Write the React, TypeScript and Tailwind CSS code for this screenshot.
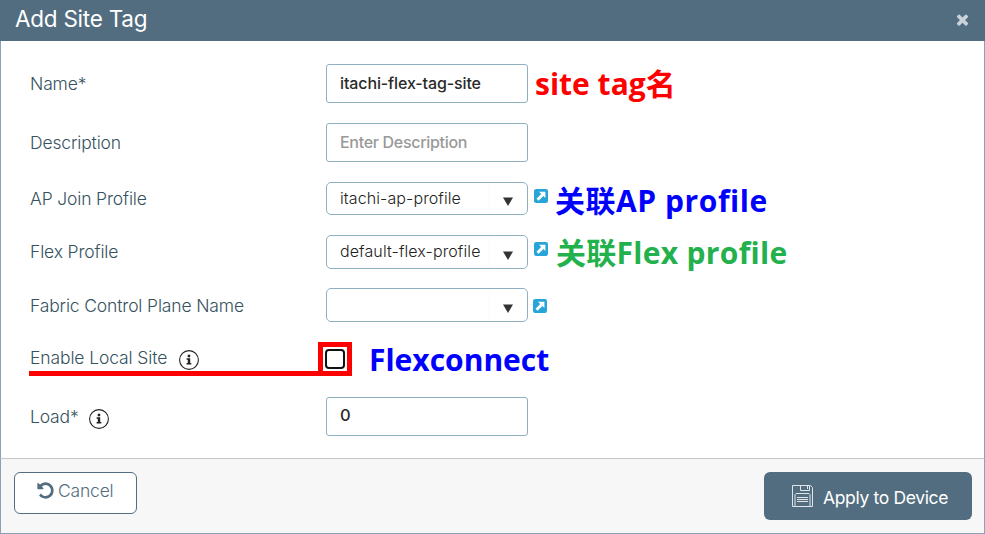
import type { ReactNode } from "react";

const ui = "font-['Inter','Liberation_Sans',sans-serif]";
const noteFont =
  "font-['Open_Sans','Noto_Sans_CJK_SC',sans-serif] font-bold whitespace-pre leading-none";

function Row({ className, label, children }: { className: string; label: ReactNode; children: ReactNode }) {
  return (
    <div className={`flex items-center ${className}`}>
      <div className="flex w-[296px] shrink-0 items-center pt-[2px] text-[17.5px] font-light tracking-[-0.15px] text-[#36525e]">
        {label}
      </div>
      {children}
    </div>
  );
}

function Box({ children, className }: { children: string; className: string }) {
  return (
    <div className={`flex h-[39px] w-[202px] items-center rounded-[3px] border border-[#8fb0c0] bg-white pb-[2px] pl-[13px] ${className}`}>
      {children}
    </div>
  );
}

function Select({ children }: { children?: ReactNode }) {
  return (
    <div className="flex h-full w-[202px] items-center justify-between rounded-[5px] border border-[#8fb0c0] bg-white pl-[13px] text-[16px] font-light tracking-[0.1px] text-[#222]">
      <span className="mb-[2px] whitespace-nowrap">{children}</span>
      <span className="flex h-full w-[38px] items-center justify-center border-l border-[#fafafa] pr-px">
        <svg className="mt-[6px] h-[9px] w-[10px]" viewBox="0 0 10 9">
          <path d="M0 .5h10L5 9z" fill="#333" />
        </svg>
      </span>
    </div>
  );
}

function LinkIcon({ className }: { className: string }) {
  return (
    <svg className={`h-[14px] w-[14px] shrink-0 ${className}`} viewBox="0 0 14 14">
      <rect width="14" height="14" rx="2.2" fill="#27a5d8" />
      <path d="M5 2.7h6.4V9L9.4 7.1 4.5 11.7 2.5 9.7 7.2 4.9z" fill="#fff" />
    </svg>
  );
}

function Info({ className }: { className: string }) {
  return (
    <svg className={`h-[20px] w-[20px] shrink-0 ${className}`} viewBox="0 0 20 20">
      <circle cx="10" cy="10" r="9.4" fill="none" stroke="#222" strokeWidth="1.1" />
      <path d="M8.7 4.8h2.5v2.4H8.7zM7.6 8.3h3.6v4.7h1.1v1.4H7.6V13h1.2V9.7H7.6z" fill="#222" />
    </svg>
  );
}

export default function App() {
  return (
    <div className={`flex h-[534px] w-[985px] flex-col overflow-hidden bg-white ${ui}`}>
      <header className="flex h-[41px] shrink-0 items-center justify-between bg-[#526d80] pr-[14px] pl-[15px] text-white">
        <h1 className="pb-[3px] text-[22.5px] font-normal tracking-[-0.25px]">Add Site Tag</h1>
        <svg className="mb-[3px] h-[17px] w-[17px]" viewBox="0 0 1792 1792" fill="#cbd3d9">
          <path d="M1490 1322q0 40-28 68l-136 136q-28 28-68 28t-68-28l-294-294-294 294q-28 28-68 28t-68-28l-136-136q-28-28-28-68t28-68l294-294-294-294q-28-28-28-68t28-68l136-136q28-28 68-28t68 28l294 294 294-294q28-28 68-28t68 28l136 136q28 28 28 68t-28 68l-294 294 294 294q28 28 28 68z" />
        </svg>
      </header>

      <main className="h-[417px] shrink-0 border-x border-[#8ca0b8] pt-[23px] pl-[29px]">
        <Row className="h-[39px]" label={<span>Name*</span>}>
          <Box className="text-[16px] font-medium tracking-[-0.12px] text-[#2a2a2a]">itachi-flex-tag-site</Box>
          <span className={`${noteFont} ml-[7px] text-[30px] text-[#ff0000]`}>site tag名</span>
        </Row>
        <Row className="mt-5 h-[39px]" label={<span>Description</span>}>
          <Box className="text-[16px] font-medium tracking-[-0.3px] text-[#999]">Enter Description</Box>
        </Row>
        <Row className="mt-5 h-[33px]" label={<span>AP Join Profile</span>}>
          <Select><span>itachi-ap-profile</span></Select>
          <LinkIcon className="mb-[5px] ml-[6px]" />
          <span className={`${noteFont} mt-[5px] ml-[7px] text-[30px] tracking-[0.55px] text-[#0000ff]`}>关联AP profile</span>
        </Row>
        <Row className="mt-5 h-[34px]" label={<span className="pb-[2px]">Flex Profile</span>}>
          <Select><span>default-flex-profile</span></Select>
          <LinkIcon className="mb-[6px] ml-[6px]" />
          <span className={`${noteFont} mt-[2px] ml-[8px] text-[30px] tracking-[0.3px] text-[#22b14c]`}>关联Flex profile</span>
        </Row>
        <Row className="mt-[19px] h-[34px]" label={<span>Fabric Control Plane Name</span>}>
          <Select />
          <LinkIcon className="mt-[2px] ml-[5px]" />
        </Row>
        <div className="relative mt-5 flex h-[34px] items-center">
          <div className="flex w-[288px] shrink-0 items-center text-[17.5px] font-light tracking-[-0.12px] text-[#36525e]">
            <span className="mb-[2px]">Enable Local Site</span>
            <Info className="mt-[1px] ml-[12px]" />
          </div>
          <div className="absolute top-[29px] -left-px h-[5px] w-[290px] bg-[#ff0000]" />
          <div className="flex h-[34px] w-[34px] items-center justify-center border-5 border-[#ff0000]">
            <div className="h-5 w-5 rounded-[4px] border-2 border-[#111] bg-white" />
          </div>
          <span className={`${noteFont} mt-[2px] ml-[17px] text-[30px] text-[#0000ff]`}>Flexconnect</span>
        </div>
        <Row
          className="mt-[21px] h-[39px]"
          label={
            <>
              <span>Load*</span>
              <Info className="mt-[2px] ml-[10px]" />
            </>
          }
        >
          <Box className="text-[16.5px] font-medium text-[#2a2a2a]">0</Box>
        </Row>
      </main>

      <footer className="flex h-[76px] shrink-0 items-start justify-between border border-[#8ca0b8] border-t-[#c4c6c8] bg-[#f7f7f7] px-[13px] pt-[13px] pr-[12px]">
        <button className="flex h-[42px] w-[123px] items-center rounded-[6px] border border-[#526d80] bg-white pb-[3px] pl-[21px] text-[17.5px] font-light tracking-[-0.2px] text-[#526d80]">
          <svg className="mr-[3px] mb-[2px] h-[19px] w-[19px] shrink-0" viewBox="0 0 1792 1792" fill="#526d80">
            <path d="M1664 896q0 156-61 298t-164 245-245 164-298 61q-172 0-327-72.5t-264-204.5q-7-10-6.5-22.5t8.5-20.5l137-138q10-9 25-9 16 2 23 12 73 95 179 147t225 52q104 0 198.5-40.5t163.5-109.5 109.5-163.5 40.5-198.5-40.5-198.5-109.5-163.5-163.5-109.5-198.5-40.5q-98 0-188 35.5t-160 101.5l137 138q31 30 14 69-17 40-59 40h-448q-26 0-45-19t-19-45v-448q0-42 40-59 39-17 69 14l130 129q107-101 244.5-156.5t284.5-55.5q156 0 298 61t245 164 164 245 61 298z" />
          </svg>
          <span>Cancel</span>
        </button>
        <button className="flex h-[48px] w-[208px] items-center rounded-[6px] bg-[#526d80] pl-[28px] text-[17.5px] tracking-[-0.35px] text-white">
          <svg className="h-[22px] w-[21px] shrink-0" viewBox="0 0 21 22" fill="none" stroke="#dfe5e9">
            <path d="M.5.5h18l2 2v19H.5zM8.5.5v5h9v-5M15.5 1v3M3 21.5V9.5l1-1h13l1 1v12M5 12.5h11M5 14.5h11M5 16.5h11" />
          </svg>
          <span className="mt-[4px] ml-[10px] whitespace-nowrap">Apply to Device</span>
        </button>
      </footer>
    </div>
  );
}
